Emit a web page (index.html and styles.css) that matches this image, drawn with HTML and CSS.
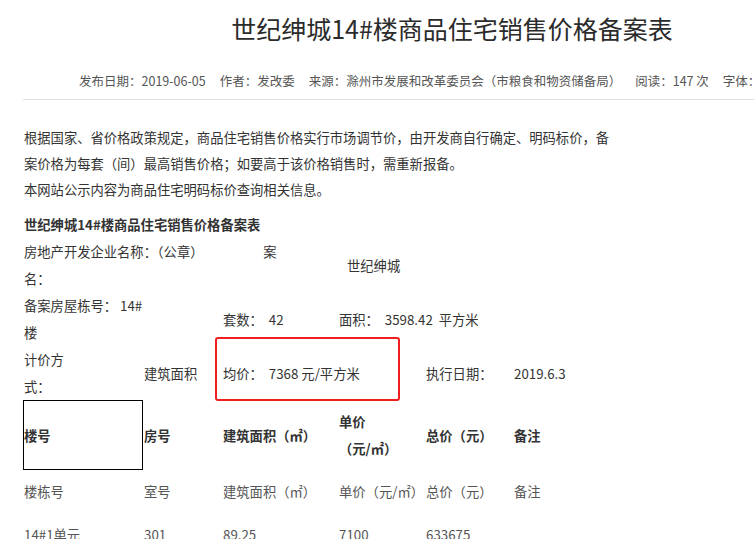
FILE: index.html
```html
<!DOCTYPE html>
<html lang="zh-CN">
<head>
    <meta charset="UTF-8">
    <meta name="viewport" content="width=device-width, initial-scale=1.0">
    <title>世纪绅城14#楼商品住宅销售价格备案表</title>
    <link rel="stylesheet" href="styles.css">
</head>
<body>

    <div class="article">
        <h1 class="title">世纪绅城14#楼商品住宅销售价格备案表</h1>

        <div class="meta">
            <span>发布日期：2019-06-05</span>
            <span>作者：发改委</span>
            <span>来源：滁州市发展和改革委员会（市粮食和物资储备局）</span>
            <span>阅读：147 次</span>
            <span>字体：大 中 小</span>
        </div>

        <div class="content">
            <p class="notice">根据国家、省价格政策规定，商品住宅销售价格实行市场调节价，由开发商自行确定、明码标价，备案价格为每套（间）最高销售价格；如要高于该价格销售时，需重新报备。</p>
            <p>本网站公示内容为商品住宅明码标价查询相关信息。</p>
            <p class="caption">世纪绅城14#楼商品住宅销售价格备案表</p>

            <table class="price-table">
                <colgroup>
                    <col class="c1">
                    <col class="c2">
                    <col class="c3">
                    <col class="c4">
                    <col class="c5">
                    <col class="c6">
                </colgroup>
                <tr class="info-row">
                    <td colspan="3"><div class="wrap-company">房地产开发企业名称：（公章）　　　　　案名：</div></td>
                    <td colspan="3" class="project">世纪绅城</td>
                </tr>
                <tr class="info-row">
                    <td colspan="2"><div class="wrap-building">备案房屋栋号： 14#楼</div></td>
                    <td>套数：&nbsp; 42</td>
                    <td colspan="3">面积：&nbsp; 3598.42&nbsp; 平方米</td>
                </tr>
                <tr class="info-row">
                    <td><div class="wrap-method">计价方式：</div></td>
                    <td>建筑面积</td>
                    <td colspan="2" class="has-mark">均价：&nbsp; 7368 元/平方米<span class="mark"></span></td>
                    <td>执行日期：</td>
                    <td>2019.6.3</td>
                </tr>
                <tr class="head-row">
                    <td class="boxed">楼号</td>
                    <td>房号</td>
                    <td>建筑面积（㎡）</td>
                    <td>单价<br>（元/㎡）</td>
                    <td>总价（元）</td>
                    <td>备注</td>
                </tr>
                <tr class="data-row">
                    <td>楼栋号</td>
                    <td>室号</td>
                    <td>建筑面积（㎡）</td>
                    <td>单价（元/㎡）</td>
                    <td>总价（元）</td>
                    <td>备注</td>
                </tr>
                <tr class="data-row">
                    <td>14#1单元</td>
                    <td>301</td>
                    <td>89.25</td>
                    <td>7100</td>
                    <td>633675</td>
                    <td></td>
                </tr>
            </table>
        </div>
    </div>

</body>
</html>
```

FILE: styles.css
```css
html, body {
    height: 100%;
    overflow: hidden;
}
body {
    margin: 0;
    padding: 0;
    font-family: "Noto Sans CJK SC", "Liberation Sans", sans-serif;
    font-size: 13.3px;
    color: #333;
    background-color: #fff;
}
.article {
    width: 856px;
    margin-left: 24px;
}
.title {
    margin: 0;
    padding-top: 8px;
    font-size: 25px;
    font-weight: normal;
    line-height: 40px;
    text-align: center;
    color: #2b2b2b;
}
.meta {
    display: flex;
    gap: 14px;
    margin-top: 23px;
    margin-left: -1px;
    padding-left: 56px;
    padding-bottom: 8px;
    font-size: 12.5px;
    line-height: 20px;
    color: #555;
    white-space: nowrap;
    border-bottom: 1px solid #e0e0e0;
}
.content {
    padding-top: 25px;
}
.content p {
    margin: 0;
    width: 590px;
    line-height: 26px;
}
.content p.caption {
    margin-top: 9px;
    font-weight: bold;
}
.price-table {
    margin-left: -1px;
    border-collapse: separate;
    border-spacing: 0;
    table-layout: fixed;
    width: 580px;
    line-height: 27px;
}
.c1 { width: 120px; }
.c2 { width: 79px; }
.c3 { width: 116px; }
.c4 { width: 87px; }
.c5 { width: 88px; }
.c6 { width: 90px; }
.price-table td {
    padding: 0 0 0 1px;
    vertical-align: middle;
}
.wrap-company {
    width: 275px;
}
.wrap-building {
    width: 130px;
}
.wrap-method {
    width: 48px;
}
.price-table td.project {
    padding-left: 9px;
}
.has-mark {
    position: relative;
}
.mark {
    position: absolute;
    left: -7px;
    top: -9px;
    width: 181px;
    height: 60px;
    border: 2px solid #f21d1d;
    border-radius: 3px;
}
.head-row td {
    padding-top: 8px;
    padding-bottom: 8px;
    font-weight: bold;
}
.head-row td.boxed {
    border: 1px solid #000;
    padding: 0;
}
.data-row td {
    padding-top: 8px;
    padding-bottom: 8px;
    color: #555;
}
```
